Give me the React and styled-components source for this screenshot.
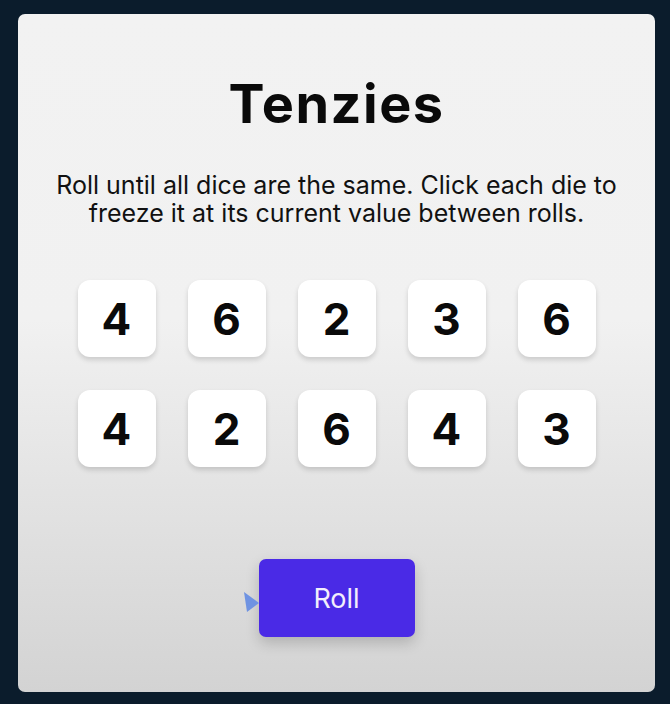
import React from 'react';
import styled, { createGlobalStyle } from 'styled-components';

const GlobalStyle = createGlobalStyle`
	html, body {
		margin: 0;
		padding: 0;
		background: #0b1c2c;
	}
	body {
		font-family: Inter, "Noto Sans", sans-serif;
	}
`;

const Page = styled.div`
	width: 670px;
	height: 704px;
	padding: 14px 0 0 18px;
	box-sizing: border-box;
`;

const Card = styled.main`
	position: relative;
	width: 637px;
	height: 678px;
	border-radius: 7px;
	background: linear-gradient(180deg, #f2f2f2 0%, #f1f1f1 45%, #d3d3d3 100%);
	display: flex;
	flex-direction: column;
	align-items: center;
	box-sizing: border-box;
	padding-top: 58px;
`;

const Title = styled.h1`
	margin: 0;
	font-family: Inter, sans-serif;
	font-weight: 700;
	font-size: 54px;
	letter-spacing: 1.5px;
	line-height: 64px;
	color: #0a0a0a;
`;

const Intro = styled.p`
	margin: 35px 0 0;
	width: 600px;
	text-align: center;
	font-family: Inter, sans-serif;
	font-size: 25px;
	line-height: 28px;
	color: #111;
`;

const DiceGrid = styled.div`
	margin-top: 53px;
	display: grid;
	grid-template-columns: repeat(5, 78px);
	grid-auto-rows: 77px;
	column-gap: 32px;
	row-gap: 33px;
`;

const Die = styled.button`
	border: none;
	border-radius: 12px;
	background: ${(p) => (p.held ? '#59e391' : '#ffffff')};
	box-shadow: 0 3px 5px rgba(0, 0, 0, 0.15);
	display: flex;
	align-items: center;
	justify-content: center;
	font-family: Inter, sans-serif;
	font-weight: 700;
	font-size: 44px;
	color: #0a0a0a;
	padding: 0;
`;

const RollButton = styled.button`
	position: relative;
	margin-top: 92px;
	width: 156px;
	height: 78px;
	border: none;
	border-radius: 7px;
	background: #4a2ae6;
	box-shadow: 0 6px 14px rgba(0, 0, 0, 0.18);
	color: #f2eefc;
	font-family: Inter, sans-serif;
	font-size: 27px;
	font-weight: 400;
`;

const Cursor = styled.svg`
	position: absolute;
	left: -15px;
	top: 33px;
`;

const dice = [4, 6, 2, 3, 6, 4, 2, 6, 4, 3];

export default function App() {
	return (
		<Page>
			<GlobalStyle />
			<Card>
				<Title>Tenzies</Title>
				<Intro>
					Roll until all dice are the same. Click each die to freeze it at its
					current value between rolls.
				</Intro>
				<DiceGrid>
					{dice.map((value, i) => (
						<Die key={i}>{value}</Die>
					))}
				</DiceGrid>
				<RollButton>
					<Cursor width="16" height="21" viewBox="0 0 16 21">
						<path d="M0 0 L15 11 L3 20 Z" fill="#6f93e2" />
					</Cursor>
					Roll
				</RollButton>
			</Card>
		</Page>
	);
}
